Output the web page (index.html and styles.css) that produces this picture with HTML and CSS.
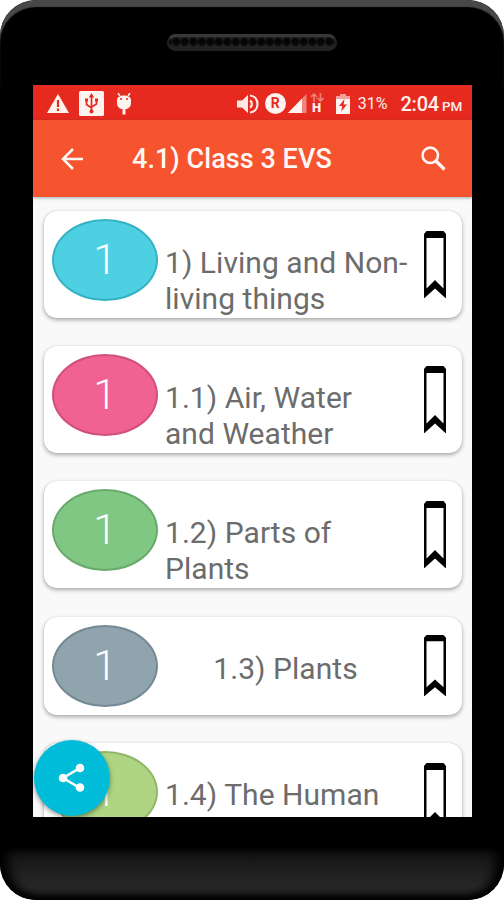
FILE: index.html
```
<!DOCTYPE html>
<html lang="en">
<head>
    <meta charset="UTF-8">
    <meta name="viewport" content="width=device-width, initial-scale=1.0">
    <title>4.1) Class 3 EVS</title>
    <link rel="stylesheet" href="styles.css">
</head>
<body>
    <!-- Shared bookmark shape, stretched to each card -->
    <svg width="0" height="0" class="defs">
        <symbol id="bookmark" viewBox="0 0 22 67" preserveAspectRatio="none">
            <path fill-rule="evenodd" d="M2.5 0h17L22 3v64.500L11 57.500 0 67.500V3zM2.500 7v50.500L11 49l8.500 8.500V7z"/>
        </symbol>
    </svg>

    <div class="phone">
        <div class="phone-top">
            <div class="speaker"></div>
        </div>

        <div class="screen">
            <div class="status-bar">
                <svg class="icon-warning" width="22" height="20" viewBox="0 0 22 20">
                    <path d="M11 0l11 19H0z" fill="#fff3ec"/>
                    <path d="M11 6v7M11 14.500v2.500" stroke="#e62a20" stroke-width="2.200"/>
                </svg>
                <svg class="icon-usb" width="25" height="25" viewBox="0 0 25 25">
                    <rect width="25" height="25" rx="1.500" fill="#fff3f0"/>
                    <g fill="none" stroke="#e62a20" stroke-width="1.700">
                        <path d="M12.500 5v15M7.500 9v4.500l5 3.500M17.500 9v4l-5 3"/>
                    </g>
                    <path d="M12.500 2l2.700 4.500H9.800zM6 7.500h3v3H6zM16 7.500h3v3h-3z" fill="#e62a20"/>
                    <circle cx="12.500" cy="20.500" r="2" fill="#e62a20"/>
                </svg>
                <svg class="icon-debug" width="16" height="22" viewBox="0 0 16 22">
                    <path d="M2 0l2 3M14 0l-2 3" stroke="#fff3f0" stroke-width="1.500"/>
                    <path d="M1 7c0-6 14-6 14 0v3c0 4-3 6-5.500 6v5.500h-3V16C4 16 1 14 1 10z" fill="#fff3f0"/>
                    <circle cx="5" cy="6" r="1" fill="#e62a20"/>
                    <circle cx="11" cy="6" r="1" fill="#e62a20"/>
                </svg>
                <span class="spacer"></span>
                <svg class="icon-sound" width="22" height="20" viewBox="0 0 22 20">
                    <path d="M0 6.500h5L11 1v18l-6-5.500H0z" fill="#ffeae6"/>
                    <path d="M13 6.500c2.500 1.500 2.500 5.500 0 7M13 1.500c10 1 10 16 0 17" fill="none" stroke="#ffeae6" stroke-width="2.200"/>
                </svg>
                <span class="roaming">R</span>
                <svg class="icon-signal" width="19" height="20" viewBox="0 0 19 20">
                    <path d="M18.500 0v19H0z" fill="#f0837a"/>
                    <path d="M14 4.600V19H0z" fill="#fff3f0"/>
                </svg>
                <span class="network">
                    <svg width="14" height="9" viewBox="0 0 14 9">
                        <path d="M4 9V1M1 4l3-3 3 3M10.500 0v8M7.500 5l3 3 3-3" fill="none" stroke="#ef7d73" stroke-width="1.700"/>
                    </svg>
                    <span>H</span>
                </span>
                <svg class="icon-battery" width="14" height="20" viewBox="0 0 14 20">
                    <path d="M4 0h6v2h4v18H0V2h4z" fill="#fff3f0"/>
                    <path d="M0 2h4V0h6v2h4v3H0z" fill="#f5a29a"/>
                    <path d="M8.500 5L3 12h3.200l-1 5.500L11 10.500H7.600z" fill="#e62a20"/>
                </svg>
                <span class="battery-level">31%</span>
                <span class="clock">2:04<small>PM</small></span>
            </div>

            <div class="toolbar">
                <svg width="23" height="22" viewBox="0 0 23 22">
                    <path d="M22 11H2M12 1L2 11l10 10" fill="none" stroke="#fff8f5" stroke-width="2.500"/>
                </svg>
                <h1>4.1) Class 3 EVS</h1>
                <svg class="search" width="25" height="25" viewBox="0 0 25 25">
                    <circle cx="9.300" cy="9.300" r="7.700" fill="none" stroke="#fff8f5" stroke-width="2.600"/>
                    <path d="M14.500 14.500l9 9" stroke="#fff8f5" stroke-width="3.200"/>
                </svg>
            </div>

            <div class="list">
                <div class="card">
                    <div class="badge cyan">1</div>
                    <div class="title"><span>1) Living and Non-<br>living things</span></div>
                    <svg class="bookmark"><use href="#bookmark"/></svg>
                </div>
                <div class="card">
                    <div class="badge pink">1</div>
                    <div class="title"><span>1.1) Air, Water<br>and Weather</span></div>
                    <svg class="bookmark"><use href="#bookmark"/></svg>
                </div>
                <div class="card">
                    <div class="badge green">1</div>
                    <div class="title"><span>1.2) Parts of<br>Plants</span></div>
                    <svg class="bookmark"><use href="#bookmark"/></svg>
                </div>
                <div class="card short">
                    <div class="badge grey">1</div>
                    <div class="title"><span>1.3) Plants</span></div>
                    <svg class="bookmark"><use href="#bookmark"/></svg>
                </div>
                <div class="card">
                    <div class="badge lime">1</div>
                    <div class="title"><span>1.4) The Human</span></div>
                    <svg class="bookmark"><use href="#bookmark"/></svg>
                </div>
            </div>

            <div class="share">
                <svg width="28" height="30" viewBox="0 0 28 30">
                    <path d="M22 5L5 15l17 10" fill="none" stroke="#fff" stroke-width="2.600"/>
                    <circle cx="22" cy="5" r="4.300" fill="#fff"/>
                    <circle cx="5" cy="15" r="4.300" fill="#fff"/>
                    <circle cx="22" cy="24.500" r="4.300" fill="#fff"/>
                </svg>
            </div>
        </div>

        <div class="phone-bottom"></div>
    </div>
</body>
</html>
```
FILE: styles.css
```
:root {
    --status: #e62a20;
    --toolbar: #f6532f;
    --text: #6c6c6c;
}

* {
    box-sizing: border-box;
}

body {
    margin: 0;
    background-color: #fff;
    font-family: Roboto, sans-serif;
}

svg {
    display: block;
    flex-shrink: 0;
}

.defs {
    position: absolute;
}

.phone {
    width: 504px;
    height: 900px;
    background-color: #000;
    border-radius: 36px;
    overflow: hidden;
}

.phone-top {
    height: 85px;
    padding-top: 34px;
    border-radius: 36px 36px 0 0;
    box-shadow: inset 0 7px 1px #484848;
}

.speaker {
    width: 170px;
    height: 17px;
    margin: 0 auto;
    border: 2px solid #222;
    border-top: 3px solid #383838;
    border-radius: 9px;
    background: radial-gradient(circle at 50% 40%, #060606 3px, #222 5px) 3px 0 / 8.5px 12px;
}

.screen {
    position: relative;
    width: 439px;
    height: 732px;
    margin-left: 33px;
    background-color: #f9f9f9;
    overflow: hidden;
}

.status-bar {
    display: flex;
    align-items: center;
    height: 35px;
    padding: 2px 10px 0 14px;
    background-color: var(--status);
    color: #ffeeea;
}

.icon-usb {
    margin-left: 10px;
}

.icon-debug {
    margin-left: 12px;
}

.spacer {
    flex: 1;
}

.roaming {
    width: 21px;
    height: 21px;
    margin-left: 6px;
    border-radius: 50%;
    background-color: #fff3f0;
    color: var(--status);
    font-size: 14px;
    font-weight: 700;
    line-height: 21px;
    text-align: center;
}

.icon-signal {
    margin-left: 2px;
}

.network {
    display: flex;
    flex-direction: column;
    align-items: center;
    margin-left: 3px;
    font-size: 13px;
    font-weight: 900;
    line-height: 12px;
}

.icon-battery {
    margin-left: 12px;
}

.battery-level {
    margin-left: 8px;
    font-size: 16px;
}

.clock {
    margin-left: 13px;
    font-size: 20px;
    font-weight: 500;
    letter-spacing: -0.2px;
}

.clock small {
    margin-left: 3px;
    font-size: 13.5px;
}

.toolbar {
    position: relative;
    z-index: 1;
    display: flex;
    align-items: center;
    height: 77px;
    padding: 0 26px 0 28px;
    background-color: var(--toolbar);
    color: #fff8f5;
    box-shadow: 0 1px 3px rgba(0, 60, 60, 0.4);
}

.toolbar h1 {
    margin: 1px 0 0 48px;
    font-size: 27px;
    font-weight: 500;
    letter-spacing: 0.05px;
    white-space: nowrap;
}

.search {
    margin-left: auto;
}

.list {
    display: flex;
    flex-direction: column;
    gap: 28.2px;
    padding: 14px 10px 0 11px;
}

.card {
    display: flex;
    flex-shrink: 0;
    height: 107px;
    padding: 8px 16px 0 8px;
    border-radius: 13px;
    background-color: #fff;
    box-shadow: 0 2px 4px rgba(0, 0, 0, 0.32), 0 0 1px rgba(0, 0, 0, 0.2);
}

.card.short {
    height: 98px;
}

.badge {
    width: 106px;
    height: 82px;
    border: 2px solid;
    border-radius: 50%;
    color: #fff;
    font-size: 42px;
    font-weight: 300;
    line-height: 77px;
    text-align: center;
    flex-shrink: 0;
}

.cyan {
    background-color: #4dd0e1;
    border-color: #35b3c5;
}

.pink {
    background-color: #f06292;
    border-color: #d14f7c;
}

.green {
    background-color: #81c784;
    border-color: #69aa6c;
}

.grey {
    background-color: #90a4ae;
    border-color: #758a94;
}

.lime {
    background-color: #aed581;
    border-color: #93b76a;
}

.title {
    width: 244px;
    margin-left: 7px;
    padding-top: 26px;
    color: var(--text);
    font-size: 30px;
    line-height: 36px;
    letter-spacing: 0.04px;
    white-space: nowrap;
}

.short .title {
    width: 241px;
    text-align: center;
}

.bookmark {
    width: 22px;
    height: 67px;
    margin: 12px 0 0 auto;
}

.short .bookmark {
    height: 61px;
    margin-top: 10px;
}

.share {
    position: absolute;
    left: 1px;
    bottom: 1px;
    z-index: 2;
    display: flex;
    align-items: center;
    justify-content: center;
    width: 76px;
    height: 76px;
    border-radius: 50%;
    background-color: #00bcd8;
    box-shadow: 0 2px 5px rgba(0, 0, 0, 0.4);
}

.phone-bottom {
    height: 53px;
    margin-top: 30px;
    border-radius: 0 0 36px 36px;
    background: linear-gradient(#111, #282828 75%, #222);
    box-shadow: inset 0 -3px 6px #000, inset 8px 0 12px #000, inset -8px 0 12px #000;
}
```
